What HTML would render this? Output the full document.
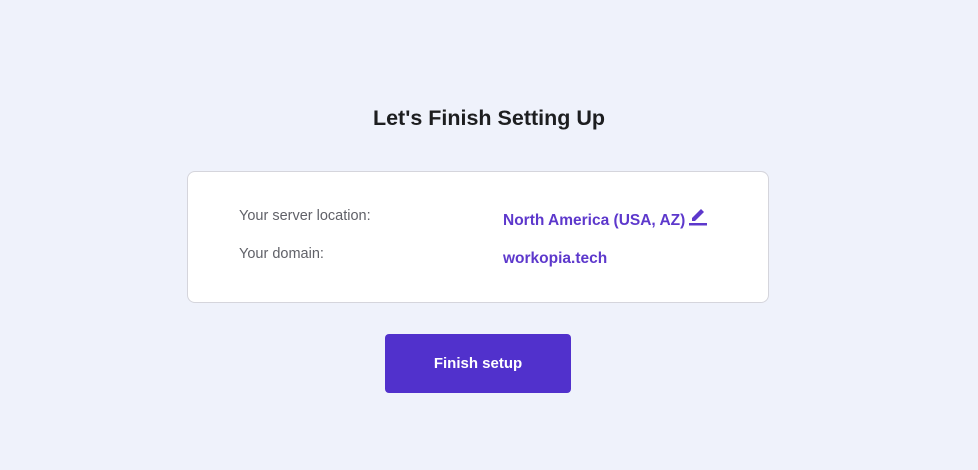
<!DOCTYPE html>
<html><head><style>
body{margin:0;width:978px;height:470px;background:#eff2fb;font-family:"Liberation Sans",sans-serif;position:relative;overflow:hidden}
h1{position:absolute;top:106px;left:0;width:978px;text-align:center;margin:0;font-size:21.5px;font-weight:bold;color:#1d1e20}
.card{position:absolute;left:187px;top:171px;width:580px;height:130px;background:#fff;border:1px solid #d5d5dc;border-radius:8px}
.l{position:absolute;left:51px;font-size:14.5px;color:#606168}
.v{position:absolute;left:315px;font-size:15.5px;font-weight:bold;color:#5d38cc}
.btn{position:absolute;left:385px;top:334px;width:186px;height:59px;background:#5131cc;border-radius:4px;color:#fff;font-weight:bold;font-size:15px;text-align:center;line-height:59px}
</style></head><body>
<h1>Let's Finish Setting Up</h1>
<div class="card">
<div class="l" style="top:36px">Your server location:</div>
<div class="v" style="top:34px">North America (USA, AZ)<svg width="20" height="20" viewBox="0 0 20 20" style="vertical-align:-1px;margin-left:3px"><path d="M4 12 L13 3 L16 6 L7 15 H4 Z" fill="#5d38cc"/><rect x="1" y="17" width="18" height="2.5" fill="#5d38cc"/></svg></div>
<div class="l" style="top:74px">Your domain:</div>
<div class="v" style="top:78px">workopia.tech</div>
</div>
<div class="btn">Finish setup</div>
</body></html>
